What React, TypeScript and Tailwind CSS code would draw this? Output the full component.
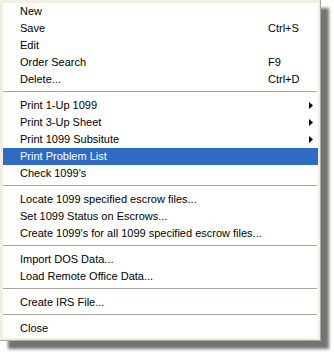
import { FC } from 'react';

type Item = { label: string; shortcut?: string; sub?: boolean; active?: boolean } | 'sep';

const items: Item[] = [
    { label: 'New' },
    { label: 'Save', shortcut: 'Ctrl+S' },
    { label: 'Edit' },
    { label: 'Order Search', shortcut: 'F9' },
    { label: 'Delete...', shortcut: 'Ctrl+D' },
    'sep',
    { label: 'Print 1-Up 1099', sub: true },
    { label: 'Print 3-Up Sheet', sub: true },
    { label: 'Print 1099 Subsitute', sub: true },
    { label: 'Print Problem List', active: true },
    { label: "Check 1099's" },
    'sep',
    { label: 'Locate 1099 specified escrow files...' },
    { label: 'Set 1099 Status on Escrows...' },
    { label: "Create 1099's for all 1099 specified escrow files..." },
    'sep',
    { label: 'Import DOS Data...' },
    { label: 'Load Remote Office Data...' },
    'sep',
    { label: 'Create IRS File...' },
    'sep',
    { label: 'Close' },
];

const Arrow: FC<{ white?: boolean }> = ({ white }) => (
    <svg width="4" height="7" viewBox="0 0 4 7" className="block">
        <polygon points="0,0 4,3.5 0,7" fill={white ? '#fff' : '#000'} />
    </svg>
);

export default function App() {
    return (
        <div className="w-[334px] h-[352px] bg-white font-['Liberation_Sans',Arial,sans-serif] text-[11px] text-black">
            <div className="w-[321px] bg-[#f1efe2] pl-[3px] pt-[3px] pr-[2px] pb-[2px] border-r border-b border-[#aca899] shadow-[8px_8px_3px_rgba(0,0,0,0.55)]">
                <ul className="bg-white pb-px">
                    {items.map((it, i) =>
                        it === 'sep' ? (
                            <li key={i} className="h-[9px] pt-[3px]">
                                <div className="h-px bg-[#aca899] mr-px" />
                            </li>
                        ) : (
                            <li
                                key={i}
                                className={`h-[17px] flex items-center pl-[17px] ${it.active ? 'bg-[#316ac5] text-white' : ''}`}
                            >
                                <span className="flex-1 whitespace-nowrap">{it.label}</span>
                                {it.shortcut && <span className="w-[50px] whitespace-nowrap">{it.shortcut}</span>}
                                {it.sub && (
                                    <span className="w-[9px]">
                                        <Arrow white={it.active} />
                                    </span>
                                )}
                            </li>
                        ),
                    )}
                </ul>
            </div>
        </div>
    );
}
